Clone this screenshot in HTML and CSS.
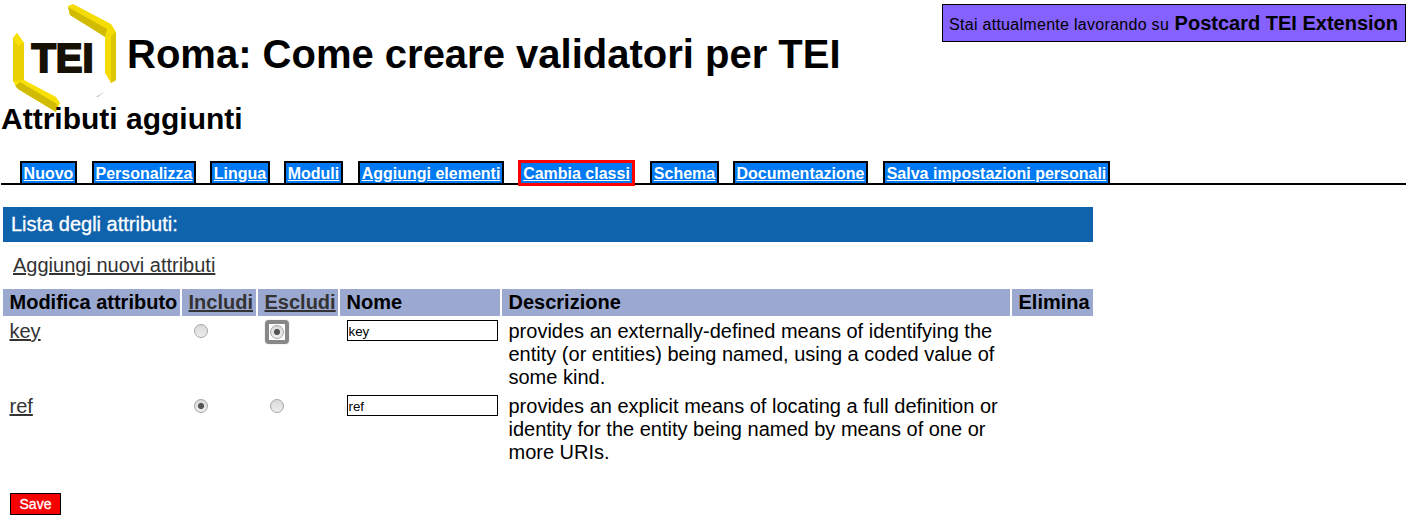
FILE: index.html
```html
<!DOCTYPE html>
<html lang="it">
<head>
<meta charset="utf-8">
<title>Roma: Come creare validatori per TEI</title>
<link rel="stylesheet" href="styles.css">
</head>
<body>
<header class="header">
  <div class="brand">
    <svg class="logo" viewBox="0 0 120 114" width="120" height="114" role="img" aria-label="TEI">
      <path fill="#f5dc05" d="M68 6 73 4 111 24 116 32V80L111 83 105 73V36L70 15Z"/>
      <path fill="#d1bb05" d="M68 7 107 29 105 37 70 15Z"/>
      <path fill="#dcc605" d="M111 36 116 32V80L111 83Z"/>
      <path fill="#e8d005" d="M13 38 17 33 24 43V80L17 85 13 81Z"/>
      <path fill="#f8e005" d="M13 38 17 33 24 43 18 46Z"/>
      <path fill="#f8e005" d="M13 81 24 80 56 97 60 103 56 112 18 89Z"/>
      <path fill="#d1bb05" d="M15 86 20 82 57 104 56 112 18 89Z"/>
      <path fill="#bbb" d="M96 97 105 91 98 97Z"/>
      <text class="logo-text" x="31.5" y="72" textLength="62" lengthAdjust="spacing">TEI</text>
    </svg>
    <h1 class="title">Roma: Come creare validatori per TEI</h1>
  </div>
  <p class="status"><span class="status-label">Stai attualmente lavorando su</span> <strong class="status-name">Postcard TEI Extension</strong></p>
</header>
<h2 class="subtitle">Attributi aggiunti</h2>
<nav class="tabs">
  <a class="tab tab-new" href="#">Nuovo</a>
  <a class="tab tab-customize" href="#">Personalizza</a>
  <a class="tab tab-language" href="#">Lingua</a>
  <a class="tab tab-modules" href="#">Moduli</a>
  <a class="tab tab-elements" href="#">Aggiungi elementi</a>
  <a class="tab tab-classes tab-current" href="#">Cambia classi</a>
  <a class="tab tab-schema" href="#">Schema</a>
  <a class="tab tab-docs" href="#">Documentazione</a>
  <a class="tab tab-save" href="#">Salva impostazioni personali</a>
</nav>
<main class="content">
  <div class="caption">Lista degli attributi:</div>
  <p class="add"><a class="link" href="#">Aggiungi nuovi attributi</a></p>
  <div class="grid">
    <div class="head">Modifica attributo</div>
    <div class="head"><a class="link" href="#">Includi</a></div>
    <div class="head"><a class="link" href="#">Escludi</a></div>
    <div class="head">Nome</div>
    <div class="head">Descrizione</div>
    <div class="head">Elimina</div>

    <div class="cell"><a class="link" href="#">key</a></div>
    <div class="cell"><input class="radio" type="radio" name="key"></div>
    <div class="cell"><span class="focus-ring"><input class="radio" type="radio" name="key" checked></span></div>
    <div class="cell"><input class="field" type="text" value="key"></div>
    <div class="cell">provides an externally-defined means of identifying the<br>entity (or entities) being named, using a coded value of<br>some kind.</div>
    <div class="cell"></div>

    <div class="cell"><a class="link" href="#">ref</a></div>
    <div class="cell"><input class="radio" type="radio" name="ref" checked></div>
    <div class="cell"><input class="radio" type="radio" name="ref"></div>
    <div class="cell"><input class="field" type="text" value="ref"></div>
    <div class="cell">provides an explicit means of locating a full definition or<br>identity for the entity being named by means of one or<br>more URIs.</div>
    <div class="cell"></div>
  </div>
  <button class="save" type="button">Save</button>
</main>
</body>
</html>
```
FILE: styles.css
```css
* { box-sizing: border-box; }
body { margin: 0; height: 531px; overflow: hidden; background: #fff; color: #000; font: 20px/23px "Liberation Sans", Arial, sans-serif; }
.header { display: flex; justify-content: space-between; align-items: flex-start; height: 101px; padding-right: 8px; }
.brand { display: flex; align-items: flex-start; }
.logo { display: block; flex: none; overflow: visible; }
.logo-text { font: bold 40px "Liberation Sans", Arial, sans-serif; fill: #171006; stroke: #171006; stroke-width: 2px; }
.title { margin: 31px 0 0 7px; font-size: 40px; line-height: 46px; white-space: nowrap; }
.status { display: flex; align-items: baseline; justify-content: space-between; width: 464px; height: 38px; margin: 4px 0 0; padding: 0 7px 0 6px; border: 1px solid #000; background: #8561ff; font-size: 16px; line-height: 36px; white-space: nowrap; }
.status-label { letter-spacing: .29px; }
.status-name { font-size: 20px; }
.subtitle { position: relative; margin: 0 0 0 1px; font-size: 30px; line-height: 36px; }
.tabs { display: flex; align-items: flex-start; gap: 14px; height: 25px; margin: 23px 8px 0 1px; padding-left: 19px; border-bottom: 2px solid #000; }
.tab { flex: none; height: 24px; margin-top: 1px; border: 2px solid #000; background: #0079f2; color: #fff; font-size: 16px; font-weight: bold; line-height: 21px; text-align: center; white-space: nowrap; }
.tab-new { width: 57px; }
.tab-customize { width: 104px; margin-left: 1px; }
.tab-language { width: 60px; }
.tab-modules { width: 59px; }
.tab-elements { width: 146px; margin-left: 1px; }
.tab-classes { width: 117px; }
.tab-schema { width: 69px; margin-left: 1px; }
.tab-docs { width: 135px; }
.tab-save { width: 227px; margin-left: 1px; }
.tab-current { height: 26px; margin-top: 0; border: 3px solid #f00; }
.content { width: 1090px; margin: 22px 0 0 3px; }
.caption { height: 35px; padding-left: 8px; background: #0f63ad; color: #fff; line-height: 35px; -webkit-text-stroke: .3px #fff; }
.add { margin: 12px 0; padding-left: 10px; }
.link { color: #333; }
.grid { display: grid; grid-template-columns: 177px 74px 80px 160px 508px 81px; grid-template-rows: 27px 73px 73px; gap: 2px; }
.head { padding: 2px 0 0 6.5px; background: #9ba9d0; font-weight: bold; white-space: nowrap; }
.cell { padding: 2px 0 0 6.5px; white-space: nowrap; }
.radio { appearance: none; display: block; width: 14px; height: 14px; margin: 4px 0 0 5px; border: 1px solid #a5a5a5; border-radius: 50%; background: linear-gradient(#d8d8d8, #eee); }
.radio:checked { background: radial-gradient(circle, #555 0 2.7px, transparent 3.4px), linear-gradient(#d8d8d8, #eee); }
.focus-ring { display: block; width: 24px; height: 24px; margin: 0 0 0 .5px; padding: 1px; border: 4px solid #888; border-radius: 4px; box-shadow: 0 0 1px #999; }
.focus-ring .radio { margin: 0; }
.field { display: block; width: 151px; height: 21px; margin: 0; padding: 2px 1px 0; border: 1px solid #000; font: 13.33px "Liberation Sans", Arial, sans-serif; }
.save { display: block; width: 51px; height: 22px; margin: 27px 0 0 7px; padding: 0; border: 1px solid #000; background: #f60000; color: #fff; font: 14px/20px "Liberation Sans", Arial, sans-serif; -webkit-text-stroke: .3px #fff; }
```
